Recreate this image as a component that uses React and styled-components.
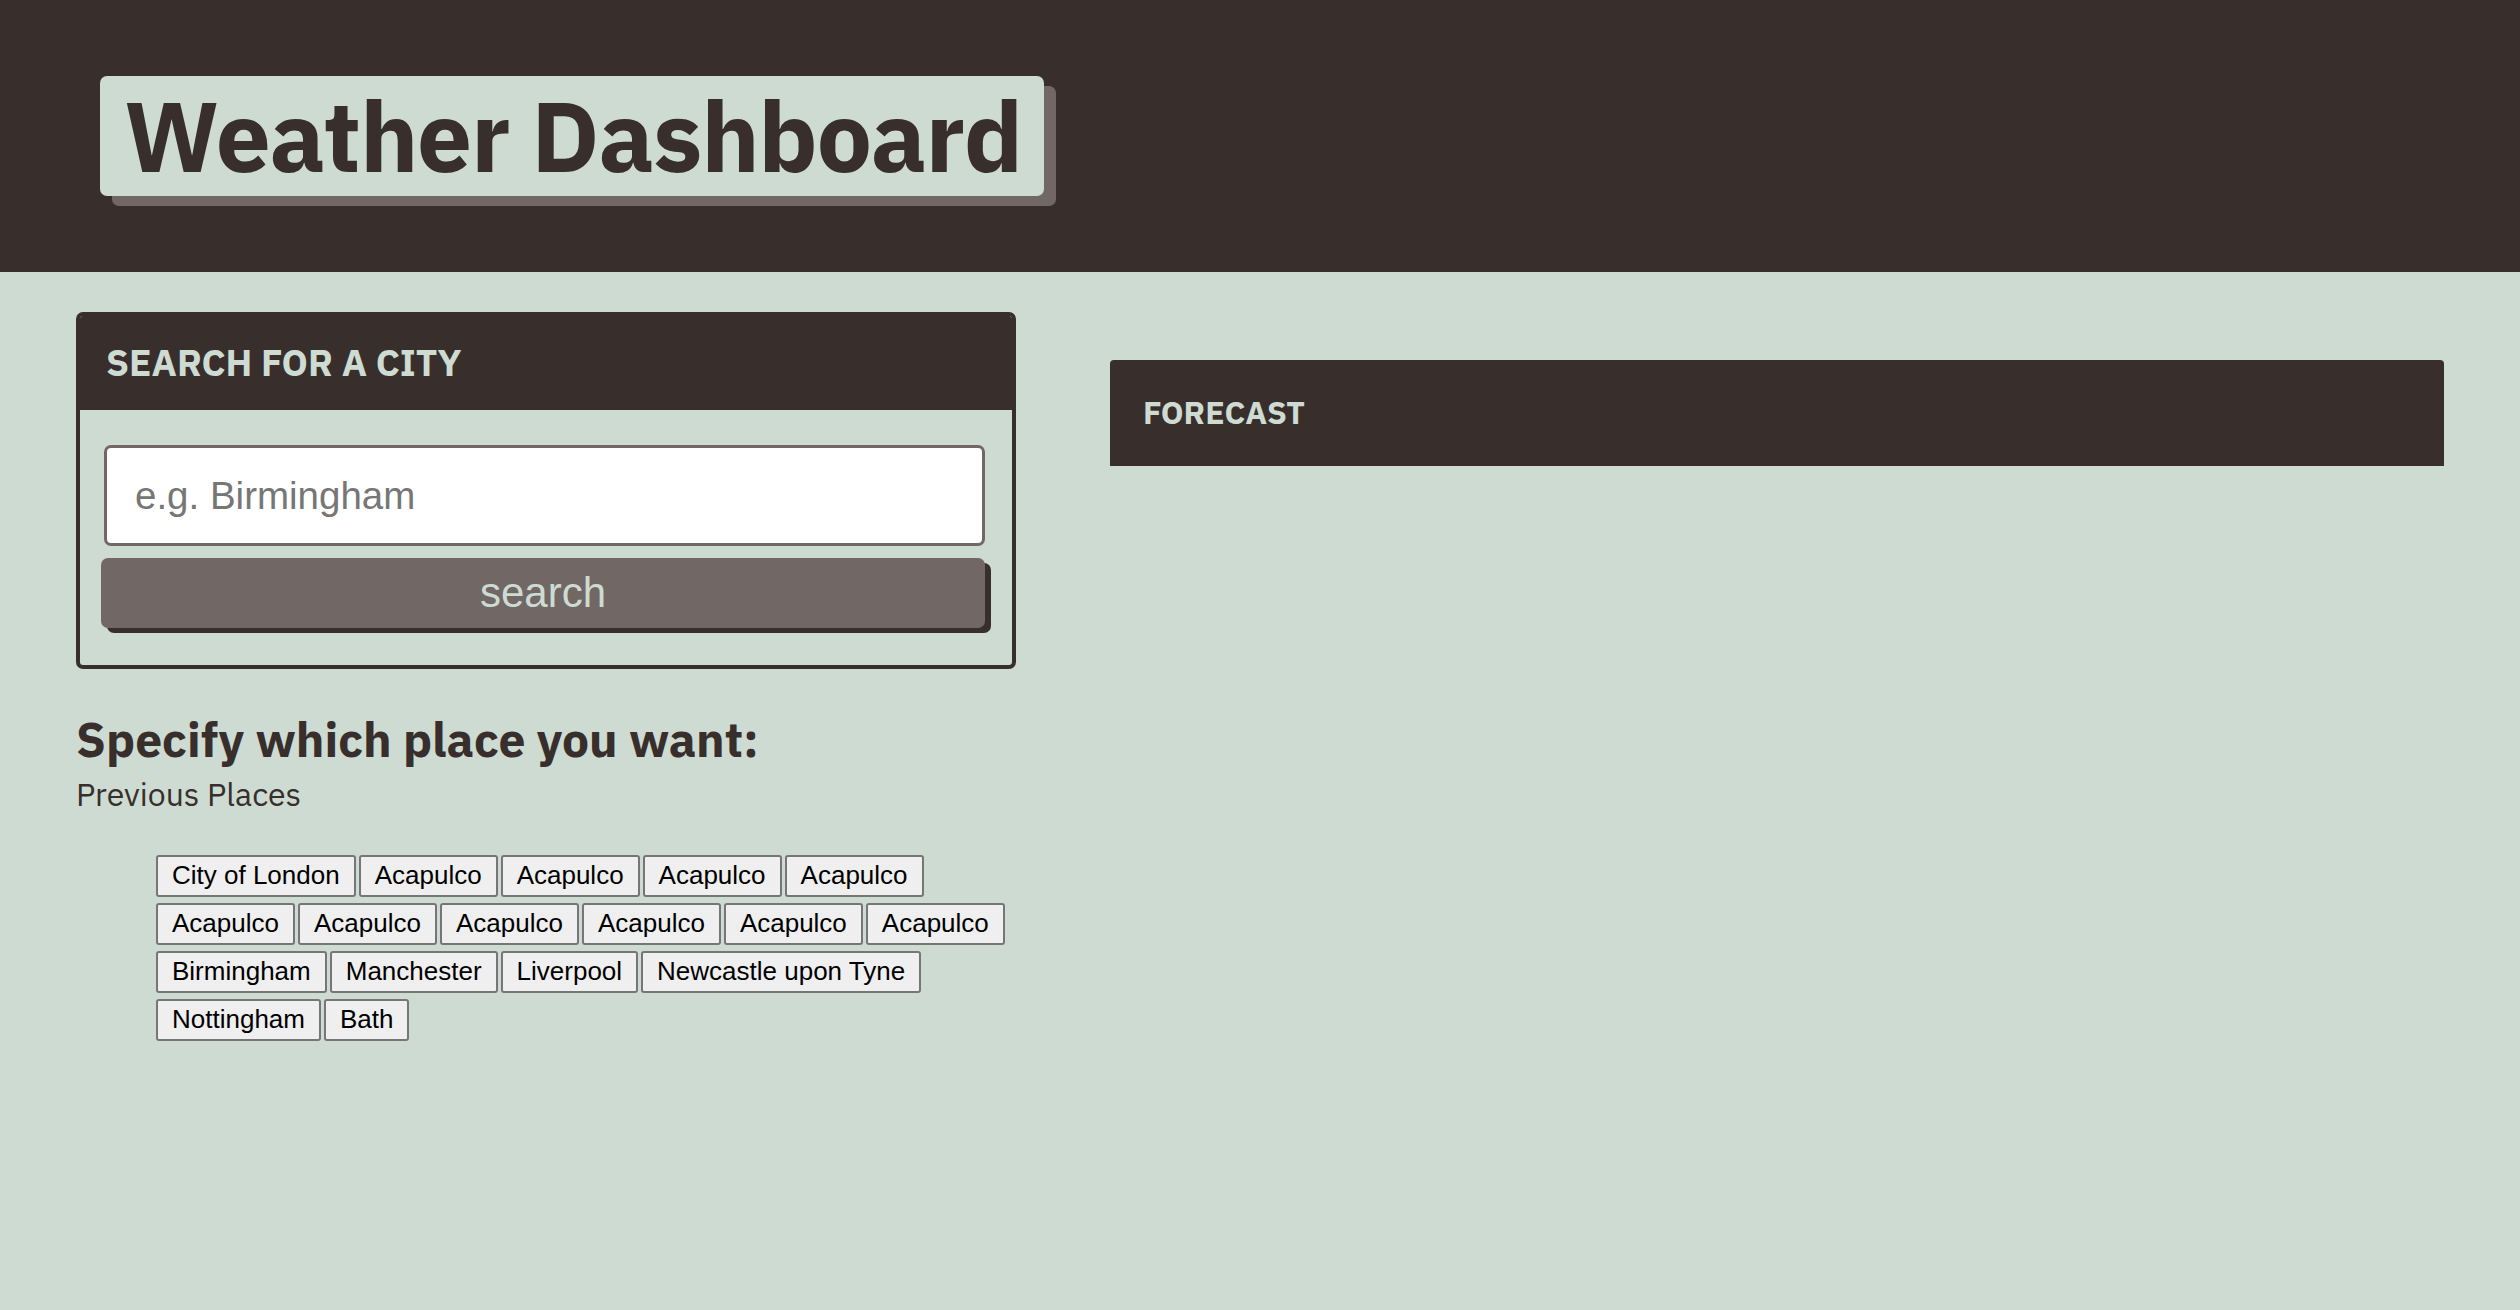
import React, { useState } from 'react';
import styled, { createGlobalStyle } from 'styled-components';

const dark = '#382f2d';
const light = '#cddbd2';
const grey = '#716866';

const GlobalStyle = createGlobalStyle`
  html, body {
    margin: 0;
    padding: 0;
    background: ${light};
    min-height: 100%;
  }
  body {
    font-family: "IBM Plex Sans", Roboto, "Noto Sans", sans-serif;
    color: ${dark};
  }
  * {
    box-sizing: border-box;
  }
`;

const Header = styled.header`
  background: ${dark};
  height: 272px;
  padding: 76px 0 0 100px;
`;

const Title = styled.h1`
  display: inline-block;
  margin: 0;
  height: 120px;
  padding: 0 22px 0 24px;
  background: ${light};
  color: ${dark};
  border-radius: 7px;
  box-shadow: 12px 10px 0 ${grey};
  font-size: 98px;
  font-weight: 700;
  line-height: 120px;
  letter-spacing: -1.2px;
`;

const Main = styled.main`
  display: grid;
  grid-template-columns: 940px 1fr;
  column-gap: 94px;
  padding: 40px 76px 0 76px;
  min-height: 1038px;
`;

const Column = styled.section`
  display: flex;
  flex-direction: column;
`;

const Card = styled.div`
  border: 4px solid ${dark};
  border-radius: 7px;
  overflow: hidden;
`;

const CardHead = styled.h2`
  margin: 0;
  height: ${(p) => p.height || 94}px;
  display: flex;
  align-items: center;
  padding-left: ${(p) => p.pad || 26}px;
  padding-bottom: ${(p) => p.lift || 0}px;
  background: ${dark};
  color: ${light};
  font-size: ${(p) => p.size || 37}px;
  font-weight: 700;
  text-transform: uppercase;
`;

const Form = styled.form`
  display: flex;
  flex-direction: column;
  gap: 12px;
  padding: 35px 27px 37px 21px;
`;

const Input = styled.input`
  height: 101px;
  margin-left: 3px;
  border: 3px solid ${grey};
  border-radius: 7px;
  background: #fff;
  padding: 0 28px;
  font-family: "Liberation Sans", Arial, sans-serif;
  font-size: 38.5px;
  color: #222;
  outline: none;

  &::placeholder {
    color: #767676;
  }
`;

const SearchButton = styled.button`
  height: 70px;
  border: none;
  border-radius: 7px;
  background: ${grey};
  box-shadow: 6px 5px 0 ${dark};
  color: ${light};
  font-family: "Liberation Sans", Arial, sans-serif;
  font-size: 42px;
  cursor: pointer;
`;

const Prompt = styled.h3`
  margin: 42px 0 0 0;
  font-size: 48px;
  font-weight: 700;
  line-height: 1.2;
`;

const SubTitle = styled.p`
  margin: 6px 0 0 0;
  font-size: 32px;
  line-height: 1.2;
`;

const PlaceList = styled.div`
  display: flex;
  flex-wrap: wrap;
  column-gap: 3px;
  row-gap: 6px;
  margin: 42px 0 0 80px;
`;

const PlaceButton = styled.button`
  height: 42px;
  padding: 0 14px;
  border: 2px solid #767676;
  border-radius: 3px;
  background: #efefef;
  color: #000;
  font-family: "Liberation Sans", Arial, sans-serif;
  font-size: 26px;
  cursor: pointer;
`;

const Forecast = styled.div`
  margin-top: 48px;
  border-radius: 4px 4px 0 0;
  overflow: hidden;
`;

const places = [
  'City of London',
  'Acapulco', 'Acapulco', 'Acapulco', 'Acapulco',
  'Acapulco', 'Acapulco', 'Acapulco', 'Acapulco', 'Acapulco', 'Acapulco',
  'Birmingham', 'Manchester', 'Liverpool', 'Newcastle upon Tyne',
  'Nottingham', 'Bath',
];

const App = () => {
  const [city, setCity] = useState('');

  return (
    <>
      <GlobalStyle />
      <Header>
        <Title>Weather Dashboard</Title>
      </Header>
      <Main>
        <Column>
          <Card>
            <CardHead lift={3}>Search for a city</CardHead>
            <Form onSubmit={(e) => e.preventDefault()}>
              <Input
                placeholder='e.g. Birmingham'
                value={city}
                onChange={(e) => setCity(e.target.value)}
              />
              <SearchButton type='submit'>search</SearchButton>
            </Form>
          </Card>
          <Prompt>Specify which place you want:</Prompt>
          <SubTitle>Previous Places</SubTitle>
          <PlaceList>
            {places.map((p, i) => (
              <PlaceButton key={i} onClick={() => setCity(p)}>
                {p}
              </PlaceButton>
            ))}
          </PlaceList>
        </Column>
        <Column>
          <Forecast>
            <CardHead height={106} pad={33} size={32} lift={2}>
              Forecast
            </CardHead>
          </Forecast>
        </Column>
      </Main>
    </>
  );
};

export default App;
